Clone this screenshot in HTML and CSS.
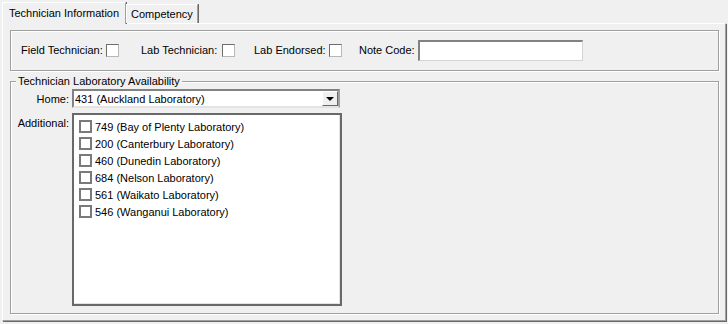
FILE: index.html
```html
<!DOCTYPE html>
<html lang="en">
<head>
    <meta charset="UTF-8">
    <title>Technician</title>
    <link rel="stylesheet" href="styles.css">
</head>
<body>
    <div class="tabs">
        <div class="tab active">Technician Information</div>
        <div class="tab">Competency</div>
    </div>
    <div class="panel">
        <div class="group flags">
            <span class="lbl field">Field Technician:</span><span class="chk"></span>
            <span class="lbl labtech">Lab Technician:</span><span class="chk"></span>
            <span class="lbl endorsed">Lab Endorsed:</span><span class="chk"></span>
            <span class="lbl note">Note Code:</span><span class="text-input"></span>
        </div>
        <fieldset class="group avail">
            <legend>Technician Laboratory Availability</legend>
            <div class="form-grid">
                <label class="row-label">Home:</label>
                <div class="combo">
                    <span class="combo-value">431 (Auckland Laboratory)</span>
                    <span class="combo-btn"><span class="arrow"></span></span>
                </div>
                <label class="row-label top">Additional:</label>
                <div class="listbox">
                    <div class="item"><span class="box"></span>749 (Bay of Plenty Laboratory)</div>
                    <div class="item"><span class="box"></span>200 (Canterbury Laboratory)</div>
                    <div class="item"><span class="box"></span>460 (Dunedin Laboratory)</div>
                    <div class="item"><span class="box"></span>684 (Nelson Laboratory)</div>
                    <div class="item"><span class="box"></span>561 (Waikato Laboratory)</div>
                    <div class="item"><span class="box"></span>546 (Wanganui Laboratory)</div>
                </div>
            </div>
        </fieldset>
    </div>
</body>
</html>
```

FILE: styles.css
```css
* {
    box-sizing: border-box;
}
body {
    font-family: 'Liberation Sans', Arial, sans-serif;
    font-size: 11px;
    color: #000;
    background-color: #f0f0f0;
    margin: 0;
    padding: 0;
    width: 728px;
    height: 324px;
    overflow: hidden;
}
.tabs {
    display: flex;
    align-items: flex-end;
    height: 23px;
    padding-left: 2px;
    position: relative;
    z-index: 2;
}
.tab {
    white-space: nowrap;
    height: 19px;
    line-height: 18px;
    padding: 0 4px;
    border-left: 1px solid #fff;
    border-top: 1px solid #fff;
    border-right: 1px solid #a0a0a0;
    box-shadow: 1px 0 0 #696969;
    background-color: #f0f0f0;
}
.tab.active {
    height: 22px;
    line-height: 20px;
    padding: 0 6px;
    margin-bottom: -1px;
}
.panel {
    margin-left: 2px;
    width: 724px;
    height: 298px;
    border-left: 1px solid #fff;
    border-top: 1px solid #fff;
    border-right: 1px solid #a0a0a0;
    border-bottom: 1px solid #a0a0a0;
    box-shadow: 1px 1px 0 #696969;
    padding: 6px 6px 0 7px;
    display: flex;
    flex-direction: column;
    gap: 4px;
}
.group {
    border: 1px solid #a0a0a0;
    box-shadow: inset 1px 1px 0 #fff, 1px 1px 0 #fff;
}
.flags {
    height: 41px;
    display: flex;
    align-items: center;
    padding: 0 10px 1px 10px;
}
.lbl {
    flex: none;
}
.lbl.field {
    width: 85px;
}
.lbl.labtech {
    width: 81px;
    margin-left: 22px;
}
.lbl.endorsed {
    width: 75px;
    margin-left: 19px;
}
.lbl.note {
    width: 59px;
    margin-left: 17px;
}
.chk {
    flex: none;
    width: 13px;
    height: 13px;
    background-color: #fff;
    border-top: 1px solid #6d6d6d;
    border-left: 1px solid #6d6d6d;
    border-right: 1px solid #b8b8b8;
    border-bottom: 1px solid #b8b8b8;
}
.text-input {
    width: 165px;
    height: 21px;
    background-color: #fff;
    border-top: 2px solid #828282;
    border-left: 2px solid #828282;
    border-right: 1px solid #d4d4d4;
    border-bottom: 1px solid #d4d4d4;
}
.avail {
    margin: 0;
    height: 239px;
    padding: 0;
    min-width: 0;
}
.avail legend {
    padding: 0 2px;
    margin-left: 5px;
    background-color: #f0f0f0;
    line-height: 13px;
}
.form-grid {
    display: grid;
    grid-template-columns: 58px 270px;
    column-gap: 3px;
    row-gap: 5px;
    margin-top: 1px;
}
.row-label {
    text-align: right;
    align-self: center;
}
.row-label.top {
    align-self: start;
    padding-top: 4px;
}
.combo {
    height: 19px;
    width: 268px;
    display: flex;
    align-items: center;
    background-color: #fff;
    border-top: 2px solid #828282;
    border-left: 2px solid #828282;
    border-right: 2px solid #a0a0a0;
    border-bottom: 2px solid #e3e3e3;
}
.combo-value {
    flex: 1;
    padding-left: 1px;
}
.combo-btn {
    width: 16px;
    height: 15px;
    background-color: #f0f0f0;
    border-top: 1px solid #fff;
    border-left: 1px solid #fff;
    border-right: 1px solid #696969;
    border-bottom: 1px solid #696969;
    display: flex;
    align-items: center;
    justify-content: center;
}
.arrow {
    width: 0;
    height: 0;
    border-left: 4px solid transparent;
    border-right: 4px solid transparent;
    border-top: 4px solid #000;
    margin-top: 1px;
}
.listbox {
    width: 270px;
    height: 193px;
    background-color: #fff;
    border-top: 2px solid #696969;
    border-left: 2px solid #696969;
    border-right: 2px solid #696969;
    border-bottom: 2px solid #696969;
    box-shadow: inset -1px -1px 0 #e3e3e3;
    padding: 3px 0 0 5px;
}
.item {
    height: 17px;
    display: flex;
    align-items: center;
}
.box {
    flex: none;
    width: 13px;
    height: 13px;
    border: 2px solid #7a7a7a;
    background-color: #fff;
    margin-right: 3px;
}
```
